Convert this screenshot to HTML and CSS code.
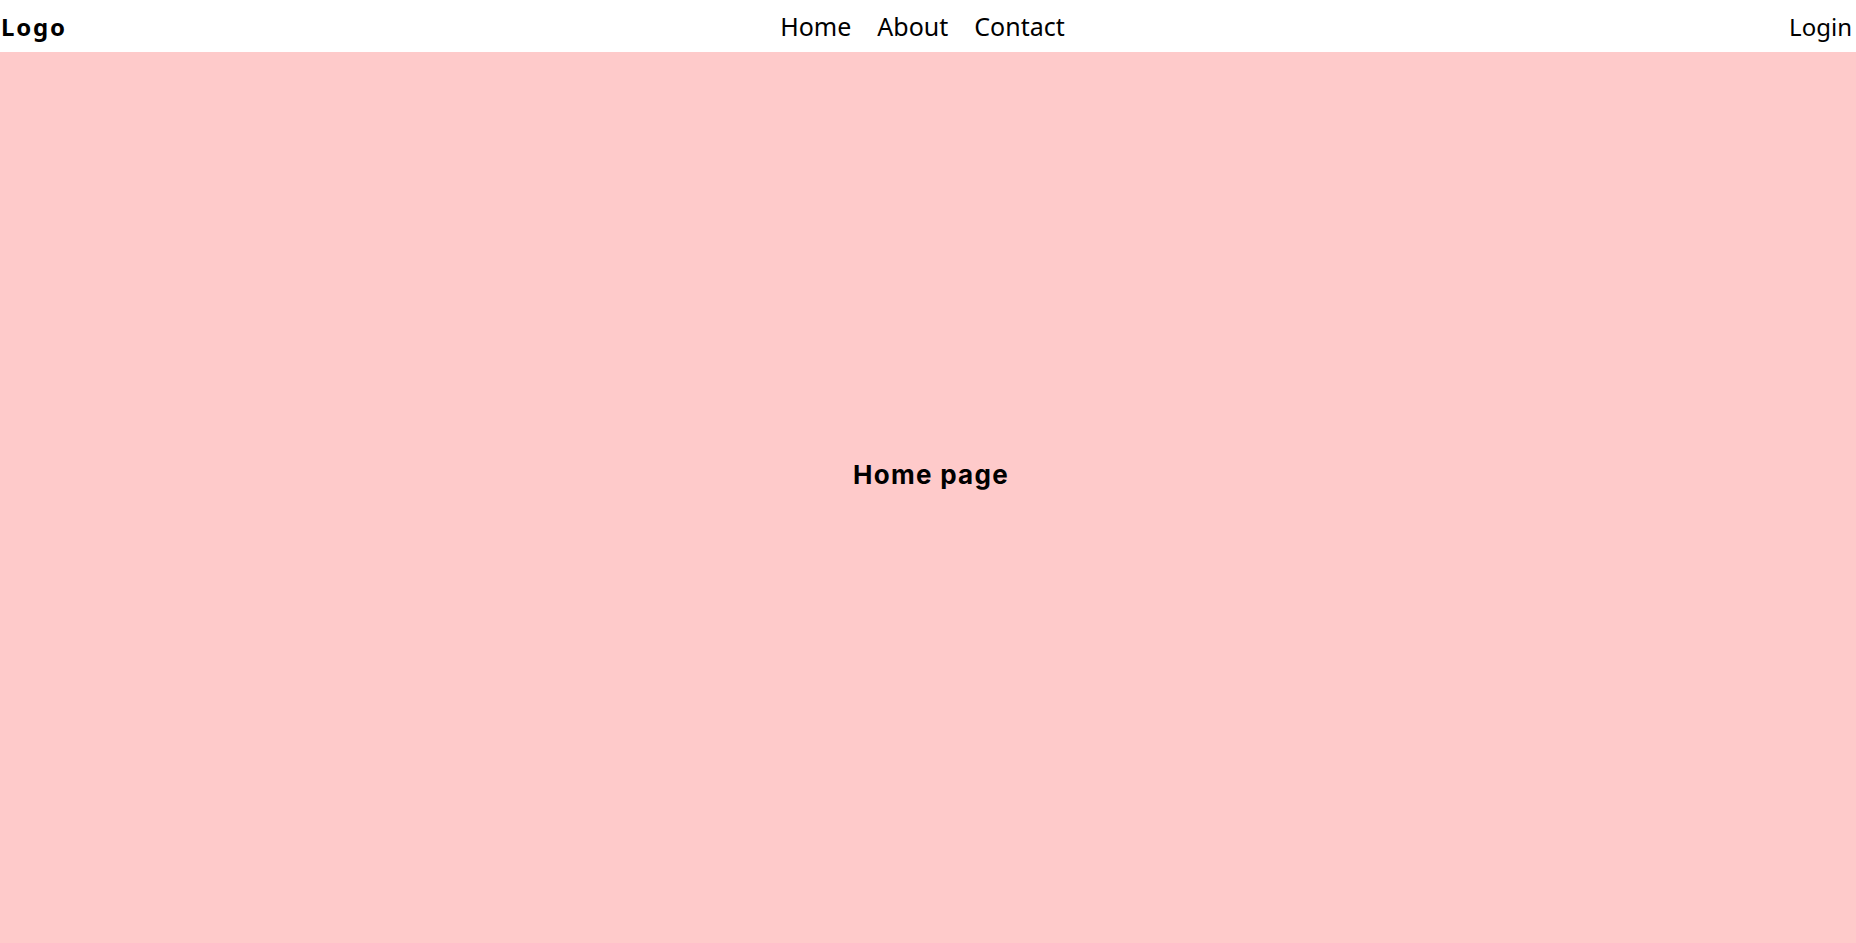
FILE: index.html
```html
<!DOCTYPE html>
<html lang="en">
<head>
<meta charset="utf-8">
<title>Home</title>
<link rel="stylesheet" href="styles.css">
</head>
<body>
<div class="page">
  <header class="topbar">
    <div class="logo">Logo</div>
    <nav class="nav">
      <a class="nav-link" href="#">Home</a>
      <a class="nav-link" href="#">About</a>
      <a class="nav-link" href="#">Contact</a>
    </nav>
    <a class="login" href="#">Login</a>
  </header>
  <main class="main">
    <h1 class="title">Home page</h1>
  </main>
</div>
</body>
</html>
```
FILE: styles.css
```css
* { box-sizing: border-box; }
html, body { margin: 0; padding: 0; }
body {
  font-family: "Noto Sans", "Open Sans", sans-serif;
  color: #000;
  background: #fecaca;
}
.page {
  height: 100vh;
  display: flex;
  flex-direction: column;
}
.topbar {
  height: 52px;
  flex: 0 0 52px;
  background: #fff;
  display: grid;
  grid-template-columns: 1fr auto 1fr;
  align-items: center;
  padding: 0 4px 0 1px;
}
.logo {
  font-weight: 700;
  font-size: 24px;
  letter-spacing: 1.8px;
}
.nav {
  display: flex;
  gap: 26px;
  margin-right: 8px;
}
.nav-link, .login {
  color: #000;
  text-decoration: none;
  font-size: 25px;
}
.login { justify-self: end; font-size: 24px; }
.main {
  flex: 1;
  display: flex;
  align-items: center;
  justify-content: center;
  padding: 0 0 46px 6px;
}
.title {
  margin: 0;
  font-family: "Inter", "Noto Sans", sans-serif;
  font-weight: 700;
  font-size: 26px;
  letter-spacing: 1.3px;
}
```
